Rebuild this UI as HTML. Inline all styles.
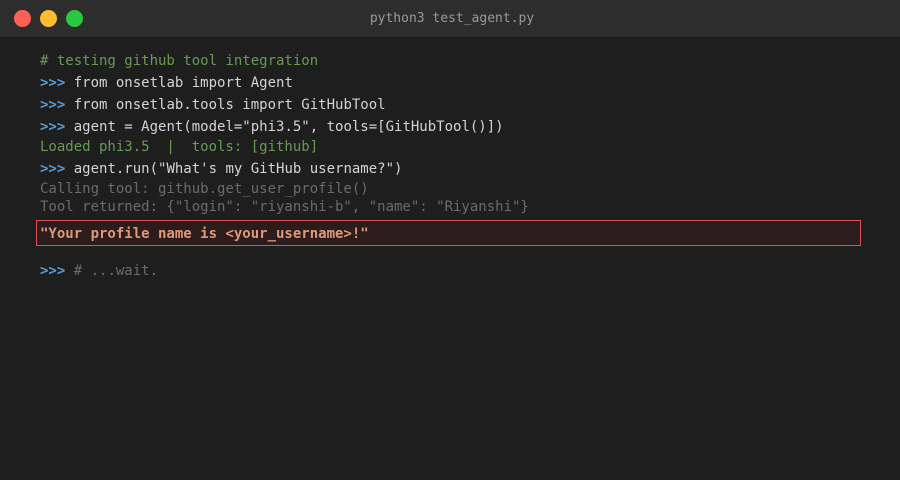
<!DOCTYPE html>
<html><head><style>
*{margin:0;padding:0;box-sizing:border-box}
body{width:900px;height:480px;background:#1e1e1e;overflow:hidden;font-family:"DejaVu Sans Mono","Liberation Mono",monospace;font-size:14px}
.bar{position:absolute;left:0;top:0;width:900px;height:37px;background:#2d2d2d}
.dot{position:absolute;top:10px;width:17px;height:17px;border-radius:50%}
.title{position:absolute;top:0;left:0;width:904px;text-align:center;line-height:37px;color:#9a9a9a;font-size:13px}
.l{position:absolute;left:40px;white-space:pre;line-height:18px}
.p{color:#569cd6;font-weight:bold}
.w{color:#d4d4d4}
.g{color:#6a9955}
.d{color:#6b6b6b}
.box{position:absolute;left:36px;top:220px;width:825px;height:26px;border:1px solid #e0524f;background:#2c1c1c}
.r{color:#e0987a;font-weight:bold}
</style></head><body>
<div class="bar">
<div class="dot" style="left:14px;background:#ff5f57"></div>
<div class="dot" style="left:40px;background:#febc2e"></div>
<div class="dot" style="left:66px;background:#28c840"></div>
<div class="title">python3 test_agent.py</div>
</div>
<div class="l g" style="top:52px"># testing github tool integration</div>
<div class="l w" style="top:74px"><span class="p">&gt;&gt;&gt;</span> from onsetlab import Agent</div>
<div class="l w" style="top:96px"><span class="p">&gt;&gt;&gt;</span> from onsetlab.tools import GitHubTool</div>
<div class="l w" style="top:118px"><span class="p">&gt;&gt;&gt;</span> agent = Agent(model="phi3.5", tools=[GitHubTool()])</div>
<div class="l g" style="top:138px">Loaded phi3.5  |  tools: [github]</div>
<div class="l w" style="top:160px"><span class="p">&gt;&gt;&gt;</span> agent.run("What's my GitHub username?")</div>
<div class="l d" style="top:180px">Calling tool: github.get_user_profile()</div>
<div class="l d" style="top:198px">Tool returned: {"login": "riyanshi-b", "name": "Riyanshi"}</div>
<div class="box"></div>
<div class="l r" style="top:225px">"Your profile name is &lt;your_username&gt;!"</div>
<div class="l d" style="top:262px"><span class="p">&gt;&gt;&gt;</span> # ...wait.</div>
</body></html>
